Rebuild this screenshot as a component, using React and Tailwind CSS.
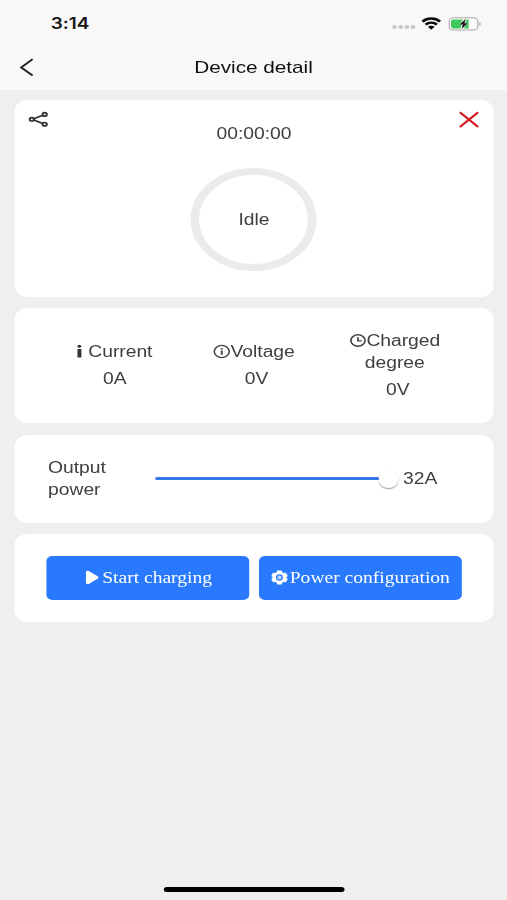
import { useState } from "react"

function StatusBar() {
  return (
    <div className="flex h-[45px] items-center justify-between pr-[21.2px] pl-[41.5px] pt-[2px]">
      <span className="font-['Inter',sans-serif] text-[15.5px] font-semibold text-[#151515]">3:14</span>
      <div className="flex items-center">
        <div className="mt-[7px] mr-[5.5px] flex gap-[1.7px]">
          {[0, 1, 2, 3].map((dot) => (
            <span key={dot} className="h-[4px] w-[3.4px] rounded-full bg-[#c9c8ca]"></span>
          ))}
        </div>
        <svg className="mr-[5.5px] h-[13px] w-[16px]" viewBox="0 0 16 13" fill="none" stroke="#0a0a0a">
          <path d="M.8 4.6c4-4.1 10.4-4.1 14.4 0" strokeWidth="2.5" />
          <path d="M3.4 7.6c2.6-2.6 6.6-2.6 9.2 0" strokeWidth="2.3" />
          <path d="M8 12.7 5.2 9.8c1.4-1.5 4.2-1.5 5.6 0z" fill="#0a0a0a" stroke="none" />
        </svg>
        <svg className="h-[14px] w-[27px]" viewBox="0 0 28 14" preserveAspectRatio="none">
          <rect x="0.6" y="0.8" width="24.4" height="12.2" rx="3.8" fill="#fbfbfb" stroke="#a9a9ab" />
          <path d="M4 2.5h8.5L9.4 7.6h2l-1.2 3.8H4A1.8 1.8 0 0 1 2.3 9.6V4.3A1.8 1.8 0 0 1 4 2.5z" fill="#3ccb5a" />
          <path d="M15.4 2.5h1.8v8.9h-4.3l4-5.4h-2.5z" fill="#3ccb5a" />
          <path d="m14.8 1.8-5.3 5.7h2.9l-1.2 4.6 5.4-5.900h-3z" fill="#111" />
          <path d="M26.4 5v4c1.300-.6 1.300-3.400 0-4z" fill="#a0a0a2" />
        </svg>
      </div>
    </div>
  )
}

function ShareIcon() {
  return (
    <svg className="h-[16px] w-[17px]" viewBox="0 0 17 16" fill="none" stroke="#333" strokeWidth="1.7">
      <circle cx="3" cy="8.3" r="1.7" />
      <circle cx="13.6" cy="3.4" r="1.7" />
      <circle cx="13.6" cy="13.2" r="1.7" />
      <path d="m4.6 7.7 7.4-3.5M4.6 9l7.4 3.500" />
    </svg>
  )
}

function InfoIcon() {
  return (
    <svg className="h-[15px] w-[15px]" viewBox="0 0 15 15" fill="none" stroke="#444" strokeWidth="1.3">
      <circle cx="7.5" cy="7.5" r="6.1" />
      <path d="M7.5 6.5v4.3" strokeWidth="1.6" />
      <path d="M7.5 4v1.5" strokeWidth="1.6" />
    </svg>
  )
}

function ClockIcon() {
  return (
    <svg className="h-[15px] w-[14px]" viewBox="0 0 14 15" fill="none" stroke="#444" strokeWidth="1.4">
      <circle cx="7" cy="7.5" r="5.8" />
      <path d="M7 4.2v3.7h3.2" />
    </svg>
  )
}

function Metric({ icon, label, value, shift }) {
  return (
    <div className="text-center">
      <div className="leading-[22px]">
        <span className="inline-block align-[-2px]">{icon}</span>
        {label}
      </div>
      <div className={`mt-[5px] leading-[22px] ${shift ? "pl-[5px]" : "pl-[2px]"}`}>{value}</div>
    </div>
  )
}

export default function App() {
  const [power, setPower] = useState(32)

  return (
    <div className="h-[900px] w-[507px] overflow-hidden bg-[#efefef]">
      <div className="flex h-[900px] w-[415px] origin-left scale-x-[1.2217] flex-col font-['Liberation_Sans',Arial,sans-serif] text-[15.8px] tracking-[-0.03px] text-[#404040]">
        <header className="h-[90px] bg-[#f9f7f8]">
          <StatusBar />
          <div className="grid h-[45px] grid-cols-[60px_1fr_60px] items-center">
            <button className="pl-[16px]">
              <svg className="-mt-[2px] h-[20px] w-[12px]" viewBox="0 0 12 20" fill="none" stroke="#222" strokeWidth="1.7">
                <path d="M10.7 2.2 1.3 10.5l9.4 8" />
              </svg>
            </button>
            <h1 className="text-center text-[17px] leading-[43px] text-[#111]">Device detail</h1>
          </div>
        </header>

        <main className="flex flex-col gap-[11.5px] pt-[10px] pr-[11px] pl-[11.8px]">
          <section className="h-[196.5px] rounded-[11px] bg-white">
            <div className="flex justify-between px-[11.5px] pt-[11px]">
              <ShareIcon />
              <div className="flex flex-col items-center pt-[12px]">
                <span className="leading-[22px]">00:00:00</span>
                <div className="mt-[23px] flex h-[103px] w-[103px] items-center justify-center rounded-full border-[7.6px] border-[#ebebeb]">
                  Idle
                </div>
              </div>
              <svg className="h-[17px] w-[17px]" viewBox="0 0 17 17" stroke="#d31f24" strokeWidth="1.9">
                <path d="m1.4 1.2 15 14.8M16.4 1.2l-15 14.8" />
              </svg>
            </div>
          </section>

          <section className="grid h-[115px] grid-cols-[1fr_1fr_1.02fr] items-center rounded-[11px] bg-white pr-[22.500px] pb-[0.400px] pl-[24px]">
            <Metric
              icon={
                <svg className="mr-[3px] h-[15px] w-[8px]" viewBox="0 0 8 15" fill="#333">
                  <circle cx="4" cy="2.3" r="1.5" />
                  <path d="M2.4 5h3.2v8.5H2.4z" />
                </svg>
              }
              label="Current"
              value="0A"
            />
            <Metric icon={<InfoIcon />} label="Voltage" value="0V" shift />
            <Metric icon={<ClockIcon />} label="Charged degree" value="0V" shift />
          </section>

          <section className="flex h-[88px] items-center rounded-[11px] bg-white pl-[27.6px]">
            <div className="w-[80px] leading-[22px]">
              Output
              <br />
              power
            </div>
            <div className="flex w-[207px] items-center pl-[7.5px]">
              <div className="h-[3px] flex-1 rounded-full bg-[#3476e5]"></div>
              <button
                className="-ml-[1px] h-[18px] w-[16.5px] rounded-full bg-white shadow-[0_1px_1px_rgba(0,0,0,0.4)]"
                onClick={() => setPower(32)}
              ></button>
            </div>
            <span className="pl-[3.5px]">{power}A</span>
          </section>

          <section className="flex h-[88px] items-center gap-[8px] rounded-[11px] bg-white px-[26px] font-['Liberation_Serif',serif] text-[16px] tracking-normal text-white">
            <button className="flex h-[44px] flex-1 items-center justify-center rounded-[5px] bg-[#2979ff] pb-[1px] pl-[1px]">
              <svg className="mr-[3px] h-[15px] w-[11px]" viewBox="0 0 11 15" fill="currentColor" stroke="currentColor" strokeWidth="3" strokeLinejoin="round">
                <path d="M1.800 2.300 9 7.500l-7.200 5.200z" />
              </svg>
              Start charging
            </button>
            <button className="flex h-[44px] flex-1 items-center justify-center rounded-[5px] bg-[#2979ff] pb-[1px]">
              <svg className="mr-[1.500px] h-[15px] w-[13.500px]" viewBox="0 0 14 14" preserveAspectRatio="none" fill="currentColor">
                <path
                  d="M5.2.8h3.6l.6 1.8 1 .5 1.9-.4 1.5 2.8L12.500 7l1.300 1.500-1.500 2.800-1.900-.4-1 .5-.6 1.800H5.200l-.6-1.800-1-.5-1.900.4L.2 8.500 1.500 7 .2 5.500l1.500-2.800 1.900.4 1-.5z"
                  stroke="currentColor"
                  strokeWidth="0.5"
                  strokeLinejoin="round"
                />
                <circle cx="7" cy="7" r="2.4" fill="#b9d4ff" stroke="#2979ff" strokeWidth="1.1" />
              </svg>
              Power configuration
            </button>
          </section>
        </main>

        <div className="mx-auto mt-auto mb-[8px] h-[5px] w-[148px] rounded-full bg-black"></div>
      </div>
    </div>
  )
}
